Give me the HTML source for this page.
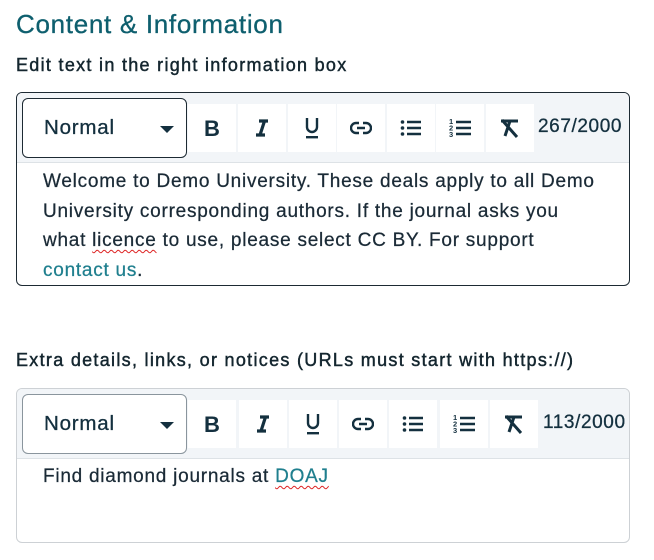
<!DOCTYPE html>
<html><head><meta charset="utf-8"><style>
*{box-sizing:border-box;margin:0;padding:0}
body{width:654px;height:560px;background:#fff;font-family:"Liberation Sans",sans-serif;color:#14303f;position:relative;overflow:hidden}
h1{position:absolute;left:16px;top:9px;font-size:26px;font-weight:normal;color:#0e5f6e;letter-spacing:0.7px;-webkit-text-stroke:0.3px #0e5f6e}
.lbl{position:absolute;left:16px;font-size:18px;color:#14262f;letter-spacing:1.3px;-webkit-text-stroke:0.45px #14262f}
.box{position:absolute;left:16px;width:614px;border-radius:6px;background:#fff;overflow:hidden}
.tb{position:absolute;left:0;top:0;width:100%;background:#f2f5f8;border-bottom:1px solid #dde2e6}
.sel{position:absolute;left:5px;top:5px;width:165px;height:60px;border-radius:6px;background:#fff;font-size:20.5px;letter-spacing:0.8px;padding:17px 0 0 21px;color:#14303f;-webkit-text-stroke:0.3px #14303f}
.sel:after{content:"";position:absolute;left:137px;top:27px;border-left:7px solid transparent;border-right:7px solid transparent;border-top:7px solid #14303f}
.btn{position:absolute;top:11px;width:48px;height:48px;background:#fff;display:flex;align-items:center;justify-content:center}
.cnt{position:absolute;top:23px;font-size:19px;letter-spacing:0.6px;color:#14303f;-webkit-text-stroke:0.3px #14303f}
.txt{position:absolute;left:26px;font-size:19px;letter-spacing:0.75px;line-height:29.5px;color:#1a2a36;-webkit-text-stroke:0.25px #1a2a36;white-space:nowrap}
a{color:#1f7f8e;text-decoration:none;-webkit-text-stroke:0.25px #1f7f8e}
.sp{text-decoration:underline wavy #d22;text-decoration-thickness:1px;text-underline-offset:3px}
</style></head><body>
<h1>Content &amp; Information</h1>
<div class="lbl" style="top:55px">Edit text in the right information box</div>

<div class="box" style="top:92px;height:194px;border:1.5px solid #1d2a33">
 <div class="tb" style="height:70px">
  <div class="sel" style="border:1.5px solid #1d2a33">Normal</div>
  <div class="btn" style="left:171px"><svg width="20" height="20" viewBox="0 0 20 20"><text x="2" y="18" font-family="Liberation Sans" font-weight="bold" font-size="22" fill="#14303f">B</text></svg></div>
  <div class="btn" style="left:221px"><svg width="18" height="18" viewBox="0 0 18 18"><path d="M6 2h9M3 16h9M11.5 2L7 16" stroke="#14303f" stroke-width="3.2" fill="none"/></svg></div>
  <div class="btn" style="left:271px"><svg width="18" height="22" viewBox="0 0 18 22"><path d="M4 1v9a5 5 0 0 0 10 0V1" stroke="#14303f" stroke-width="2.4" fill="none"/><rect x="3" y="19" width="12" height="2.4" fill="#14303f"/></svg></div>
  <div class="btn" style="left:320px"><svg width="22" height="14" viewBox="0 0 22 14"><path d="M9 2H6a5 5 0 0 0 0 10h3M13 2h3a5 5 0 0 1 0 10h-3M7 7h8" stroke="#14303f" stroke-width="2.4" fill="none"/></svg></div>
  <div class="btn" style="left:370px"><svg width="22" height="18" viewBox="0 0 22 18"><circle cx="2.5" cy="3" r="1.8" fill="#14303f"/><circle cx="2.5" cy="9" r="1.8" fill="#14303f"/><circle cx="2.5" cy="15" r="1.8" fill="#14303f"/><path d="M7 3h14M7 9h14M7 15h14" stroke="#14303f" stroke-width="2.4"/></svg></div>
  <div class="btn" style="left:419px"><svg width="22" height="20" viewBox="0 0 22 20"><text x="0" y="6" font-size="7.5" font-family="Liberation Sans" font-weight="bold" fill="#14303f">1</text><text x="0" y="12.5" font-size="7.5" font-family="Liberation Sans" font-weight="bold" fill="#14303f">2</text><text x="0" y="19" font-size="7.5" font-family="Liberation Sans" font-weight="bold" fill="#14303f">3</text><path d="M7 4h15M7 10h15M7 16h15" stroke="#14303f" stroke-width="2.4"/></svg></div>
  <div class="btn" style="left:469px"><svg width="22" height="20" viewBox="0 0 22 20"><path d="M2 3h17M11 3l-5 15M3 2l15 17" stroke="#14303f" stroke-width="3" fill="none"/></svg></div>
  <div class="cnt" style="left:521px">267/2000</div>
 </div>
 <div class="txt" style="top:74px">Welcome to Demo University. These deals apply to all Demo<br>University corresponding authors. If the journal asks you<br>what <span class="sp">licence</span> to use, please select CC BY. For support<br><a>contact us</a>.</div>
</div>

<div class="lbl" style="top:350px">Extra details, links, or notices (URLs must start with https://)</div>

<div class="box" style="top:388px;height:155px;border:1.5px solid #cdd1d5">
 <div class="tb" style="height:70px">
  <div class="sel" style="border:1.5px solid #8a959d">Normal</div>
  <div class="btn" style="left:171px"><svg width="20" height="20" viewBox="0 0 20 20"><text x="2" y="18" font-family="Liberation Sans" font-weight="bold" font-size="22" fill="#14303f">B</text></svg></div>
  <div class="btn" style="left:222px"><svg width="18" height="18" viewBox="0 0 18 18"><path d="M6 2h9M3 16h9M11.5 2L7 16" stroke="#14303f" stroke-width="3.2" fill="none"/></svg></div>
  <div class="btn" style="left:272px"><svg width="18" height="22" viewBox="0 0 18 22"><path d="M4 1v9a5 5 0 0 0 10 0V1" stroke="#14303f" stroke-width="2.4" fill="none"/><rect x="3" y="19" width="12" height="2.4" fill="#14303f"/></svg></div>
  <div class="btn" style="left:322px"><svg width="22" height="14" viewBox="0 0 22 14"><path d="M9 2H6a5 5 0 0 0 0 10h3M13 2h3a5 5 0 0 1 0 10h-3M7 7h8" stroke="#14303f" stroke-width="2.4" fill="none"/></svg></div>
  <div class="btn" style="left:372px"><svg width="22" height="18" viewBox="0 0 22 18"><circle cx="2.5" cy="3" r="1.8" fill="#14303f"/><circle cx="2.5" cy="9" r="1.8" fill="#14303f"/><circle cx="2.5" cy="15" r="1.8" fill="#14303f"/><path d="M7 3h14M7 9h14M7 15h14" stroke="#14303f" stroke-width="2.4"/></svg></div>
  <div class="btn" style="left:423px"><svg width="22" height="20" viewBox="0 0 22 20"><text x="0" y="6" font-size="7.5" font-family="Liberation Sans" font-weight="bold" fill="#14303f">1</text><text x="0" y="12.5" font-size="7.5" font-family="Liberation Sans" font-weight="bold" fill="#14303f">2</text><text x="0" y="19" font-size="7.5" font-family="Liberation Sans" font-weight="bold" fill="#14303f">3</text><path d="M7 4h15M7 10h15M7 16h15" stroke="#14303f" stroke-width="2.4"/></svg></div>
  <div class="btn" style="left:473px"><svg width="22" height="20" viewBox="0 0 22 20"><path d="M2 3h17M11 3l-5 15M3 2l15 17" stroke="#14303f" stroke-width="3" fill="none"/></svg></div>
  <div class="cnt" style="left:526px">113/2000</div>
 </div>
 <div class="txt" style="top:73px">Find diamond journals at <a class="sp">DOAJ</a></div>
</div>
</body></html>
